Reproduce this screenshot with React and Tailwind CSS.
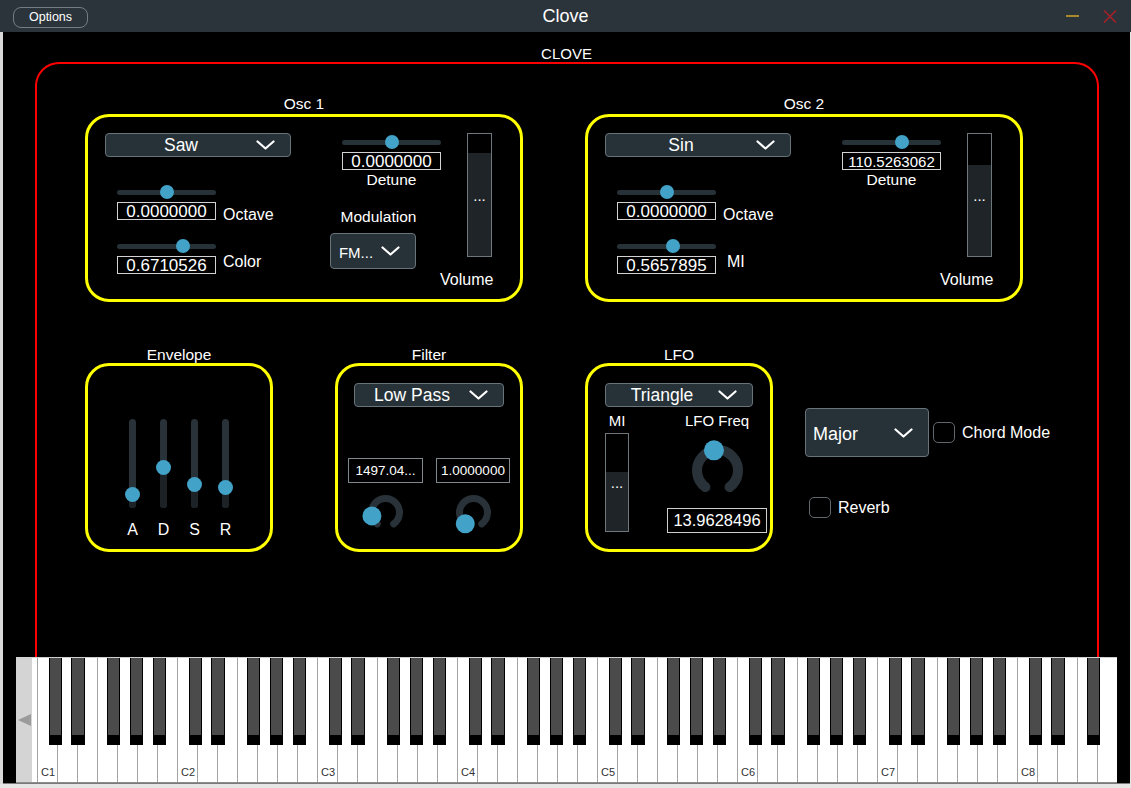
import React from 'react';

/* ── small widgets ── */
function Chevron({ className = 'mr-[15px]' }) {
  return (
    <svg width="19" height="10" viewBox="0 0 19 10" className={`shrink-0 ${className}`}>
      <polyline points="1.5,1.5 9.5,8.5 17.5,1.5" fill="none" stroke="#fff" strokeWidth="2.2" strokeLinecap="round" strokeLinejoin="round" />
    </svg>
  );
}

function Combo({ label, className = '', textClass = 'text-[17.5px]', left = false }) {
  return (
    <div className={`flex shrink-0 items-center rounded-[4px] border border-[#68737a] bg-[#263238] text-white ${className}`}>
      <span className={`flex-1 pt-[2px] leading-none ${left ? 'pl-[7px] text-left' : 'text-center'} ${textClass}`}>{label}</span>
      <Chevron />
    </div>
  );
}

function NumBox({ children, className = '' }) {
  return (
    <div className={`flex shrink-0 items-center justify-center border leading-none text-white ${className}`}>
      {children}
    </div>
  );
}

// pos = thumb centre in px from the left of a 99px track
function HSlider({ pos }) {
  return (
    <div className="relative flex h-[16px] w-[99px] items-center">
      <div className="h-[5px] w-full rounded-full bg-[#263238]" />
      <div className="absolute top-[1px] h-[14px] w-[14px] rounded-full bg-[#42a2c8]" style={{ left: pos - 7 }} />
    </div>
  );
}

// pos = thumb centre in px from the top of an 89px track
function VSlider({ pos }) {
  return (
    <div className="relative flex h-[89px] w-[15px] justify-center">
      <div className="h-full w-[7px] rounded-full bg-[#283238]" />
      <div className="absolute bottom-0 w-[7px] rounded-b-full bg-[#1c2226]" style={{ height: 89 - pos }} />
      <div className="absolute left-0 h-[15px] w-[15px] rounded-full bg-[#42a2c8]" style={{ top: pos - 7.5 }} />
    </div>
  );
}

function Bar({ className = '', fill }) {
  return (
    <div className={`relative flex shrink-0 items-center justify-center border border-[#6d777c] bg-black ${className}`}>
      <div className="absolute inset-x-0 bottom-0 bg-[#1e2428]" style={{ height: fill }} />
      <span className="relative text-[15px] leading-none text-white">...</span>
    </div>
  );
}

function Knob({ size, r, stroke, thumb, angle, className = '' }) {
  const c = size / 2;
  const pt = (a) => [c + r * Math.sin((a * Math.PI) / 180), c - r * Math.cos((a * Math.PI) / 180)];
  const [sx, sy] = pt(216);
  const [ex, ey] = pt(144);
  const [tx, ty] = pt(angle);
  return (
    <svg width={size} height={size} className={`shrink-0 overflow-visible ${className}`}>
      <path d={`M${sx} ${sy} A${r} ${r} 0 1 1 ${ex} ${ey}`} fill="none" stroke="#283238" strokeWidth={stroke} strokeLinecap="round" />
      <circle cx={tx} cy={ty} r={thumb} fill="#42a2c8" />
    </svg>
  );
}

function Check({ className = '' }) {
  return <div className={`h-[21px] w-[22px] shrink-0 rounded-[5px] border border-[#60686c] ${className}`} />;
}

function Section({ title, className = '', children }) {
  return (
    <div className={`flex shrink-0 flex-col ${className}`}>
      <div className="h-[16px] text-center text-[15.5px] leading-[16px] text-white">{title}</div>
      {children}
    </div>
  );
}

/* ── oscillator panel ── */
function Osc({ wave, octave, detune, detuneText, detuneSize, color, colorText, colorLabel, labelClass, modulation, vol }) {
  return (
    <div className="mt-[2px] flex h-[188px] w-[438px] rounded-[24px] border-[3px] border-[#ffff00] pl-[17px] pt-[16px]">
      <div className="flex w-[186px] shrink-0 flex-col">
        <Combo label={wave} className="h-[24px] w-[186px]" />
        <div className="ml-[12px] mt-[27px] flex flex-col">
          <HSlider pos={octave} />
          <div className="mt-[2px] flex items-start">
            <NumBox className="h-[18px] w-[99px] border-[#d2d2d2] text-[17px]">0.0000000</NumBox>
            <span className="ml-[7px] mt-[4px] text-[16px] leading-[18px] text-white">Octave</span>
          </div>
          <div className="mt-[14px]">
            <HSlider pos={color} />
          </div>
          <div className="mt-[2px] flex items-start">
            <NumBox className="h-[18px] w-[99px] border-[#d2d2d2] text-[17px]">{colorText}</NumBox>
            <span className={`-mt-[3px] text-[16px] leading-[18px] text-white ${labelClass}`}>{colorLabel}</span>
          </div>
        </div>
      </div>

      <div className="ml-[39px] flex w-[110px] shrink-0 flex-col">
        <div className="ml-[12px] mt-[1px] flex w-[99px] flex-col items-center">
          <HSlider pos={detune} />
          <NumBox className={`mt-[2px] h-[18px] w-[99px] border-[#d2d2d2] ${detuneSize}`}>{detuneText}</NumBox>
          <span className="mt-[2px] text-[15.5px] leading-[16px] text-white">Detune</span>
        </div>
        {modulation && (
          <>
            <span className="mt-[21px] w-[97px] text-center text-[15.5px] leading-[16px] text-white">Modulation</span>
            <Combo label="FM..." className="mt-[8px] h-[36px] w-[86px]" textClass="text-[15px]" />
          </>
        )}
      </div>

      <div className="flex w-[53px] shrink-0 flex-col">
        <Bar className="ml-[27px] h-[124px] w-[25px]" fill={vol} />
        <span className="mt-[15px] text-center text-[16px] leading-[16px] text-white">Volume</span>
      </div>
    </div>
  );
}

/* ── keyboard ── */
const NAMES = ['C', 'D', 'E', 'F', 'G', 'A', 'B'];
const WHITE = Array.from({ length: 54 }, (_, i) => ({ name: NAMES[i % 7], oct: Math.floor(i / 7) + 1 }));
const BLACK_OFFSETS = [11.7, 34.3, 70, 92.7, 115.7];
const BLACK = [];
for (let o = 0; o < 8; o++) {
  BLACK_OFFSETS.forEach((off) => {
    const left = 5 + o * 140 + off;
    if (left + 13.3 <= 1085) BLACK.push(left);
  });
}

function Keyboard() {
  return (
    <div className="ml-[13px] flex h-[126px] w-[1101px] border-b border-[#8d8d8d]">
      <div className="flex w-[16px] items-center bg-[#d4d4d4] pl-[2px]">
        <svg width="13" height="12" viewBox="0 0 13 12">
          <polygon points="0,6 13,0 13,12" fill="#9b9b9b" />
        </svg>
      </div>
      <div className="relative flex w-[1085px] border-t border-[#cfcfcf] bg-white">
        <div className="w-[5px] shrink-0" />
        {WHITE.map((k, i) => (
          <div key={i} className="flex w-[20px] shrink-0 flex-col justify-end border-l border-[#a3a3a3] pb-[4px] pl-[3px]">
            {k.name === 'C' && <span className="text-[11px] leading-[11px] text-[#333]">C{k.oct}</span>}
          </div>
        ))}
        {BLACK.map((left, i) => (
          <div
            key={i}
            className="absolute top-0 h-[87px] w-[13.3px] border-x border-b-[10px] border-black bg-[#4b4b4b]"
            style={{ left }}
          />
        ))}
      </div>
    </div>
  );
}

export default function App() {
  return (
    <div className="flex h-[788px] w-[1131px] flex-col overflow-hidden bg-[#e6e6e6] font-['Liberation_Sans',Arial,sans-serif]">
      {/* title bar */}
      <div className="grid h-[32px] shrink-0 grid-cols-[1fr_auto_1fr] items-center bg-[#2b343a]">
        <div>
          <button className="ml-[13px] h-[21px] w-[75px] rounded-[8px] border border-[#737d82] text-[12.5px] leading-none text-white">
            Options
          </button>
        </div>
        <div className="text-[18px] leading-none text-white">Clove</div>
        <div className="flex items-center justify-end gap-[24px] pr-[14px]">
          <div className="h-[2px] w-[13px] bg-[#a88a2c]" />
          <svg width="14" height="13" viewBox="0 0 14 13">
            <path d="M1 0.5 L13 12.5 M13 0.5 L1 12.5" stroke="#a3222b" strokeWidth="1.6" />
          </svg>
        </div>
      </div>

      <div className="flex">
        <div className="w-[3px] shrink-0 bg-[#d9d9d9]" />
        <div className="flex h-[752px] w-[1127px] flex-col border-b border-[#7a7a7a] bg-black">
          <div className="h-[30px] pt-[14px] text-center text-[15px] leading-[16px] text-white">CLOVE</div>

          {/* red frame */}
          <div className="ml-[32px] flex h-[595px] w-[1064px] flex-col rounded-t-[24px] border-2 border-b-0 border-[#ff0000]">
            <div className="flex gap-[62px] pl-[48px] pt-[32px]">
              <Section title="Osc 1">
                <Osc wave="Saw" octave={50} color={66} colorText="0.6710526" colorLabel="Color" labelClass="ml-[7px]"
                  detune={50} detuneText="0.0000000" detuneSize="text-[17px]" modulation vol={103} />
              </Section>
              <Section title="Osc 2">
                <Osc wave="Sin" octave={50} color={56} colorText="0.5657895" colorLabel="MI" labelClass="ml-[11px]"
                  detune={60} detuneText="110.5263062" detuneSize="text-[15px]" vol={91} />
              </Section>
            </div>

            <div className="mt-[45px] flex items-start pl-[48px]">
              <Section title="Envelope">
                <div className="flex h-[189px] w-[188px] gap-[16px] rounded-[24px] border-[3px] border-[#ffff00] pl-[37px] pt-[53px]">
                  {[['A', 75.5], ['D', 48.7], ['S', 65], ['R', 68.7]].map(([l, p]) => (
                    <div key={l} className="flex flex-col items-center">
                      <VSlider pos={p} />
                      <span className="mt-[14px] text-[16px] leading-[16px] text-white">{l}</span>
                    </div>
                  ))}
                </div>
              </Section>

              <Section title="Filter" className="ml-[62px]">
                <div className="flex h-[189px] w-[188px] flex-col rounded-[24px] border-[3px] border-[#ffff00] pt-[17px]">
                  <Combo label="Low Pass" className="ml-[16px] h-[24px] w-[150px]" />
                  <div className="ml-[10px] mt-[51px] flex gap-[13px]">
                    <NumBox className="h-[25px] w-[75px] border-[#80898d] text-[13.5px]">1497.04...</NumBox>
                    <NumBox className="h-[25px] w-[74px] border-[#80898d] text-[13.5px]">1.0000000</NumBox>
                  </div>
                  <div className="ml-[30px] mt-[12px] flex gap-[53px]">
                    <Knob size={35} r={14} stroke={7} thumb={9.5} angle={256} />
                    <Knob size={35} r={14} stroke={7} thumb={9.5} angle={216} />
                  </div>
                </div>
              </Section>

              <Section title="LFO" className="ml-[62px]">
                <div className="flex h-[189px] w-[188px] flex-col rounded-[24px] border-[3px] border-[#ffff00] pt-[17px]">
                  <Combo label="Triangle" className="ml-[17px] h-[24px] w-[148px]" />
                  <div className="mt-[6px] flex">
                    <div className="ml-[17px] flex w-[24px] flex-col items-center">
                      <span className="text-[15px] leading-[16px] text-white">MI</span>
                      <Bar className="mt-[4px] h-[99px] w-[24px]" fill={59} />
                    </div>
                    <div className="ml-[38px] flex w-[100px] flex-col items-center">
                      <span className="text-[15px] leading-[16px] text-white">LFO Freq</span>
                      <Knob className="mt-[16px]" size={51} r={20.5} stroke={10} thumb={10} angle={350} />
                      <NumBox className="mt-[12px] h-[25px] w-[100px] border-[#cfcfcf] text-[16.5px]">13.9628496</NumBox>
                    </div>
                  </div>
                </div>
              </Section>

              <div className="ml-[32px] mt-[61px] flex flex-col">
                <div className="flex items-center">
                  <Combo label="Major" left className="h-[49px] w-[124px]" textClass="text-[18px]" />
                  <Check className="ml-[4px]" />
                  <span className="ml-[7px] text-[16px] leading-none text-white">Chord Mode</span>
                </div>
                <div className="ml-[4px] mt-[40px] flex items-center">
                  <Check />
                  <span className="ml-[7px] text-[16px] leading-none text-white">Reverb</span>
                </div>
              </div>
            </div>
          </div>

          <Keyboard />
        </div>
      </div>
    </div>
  );
}
